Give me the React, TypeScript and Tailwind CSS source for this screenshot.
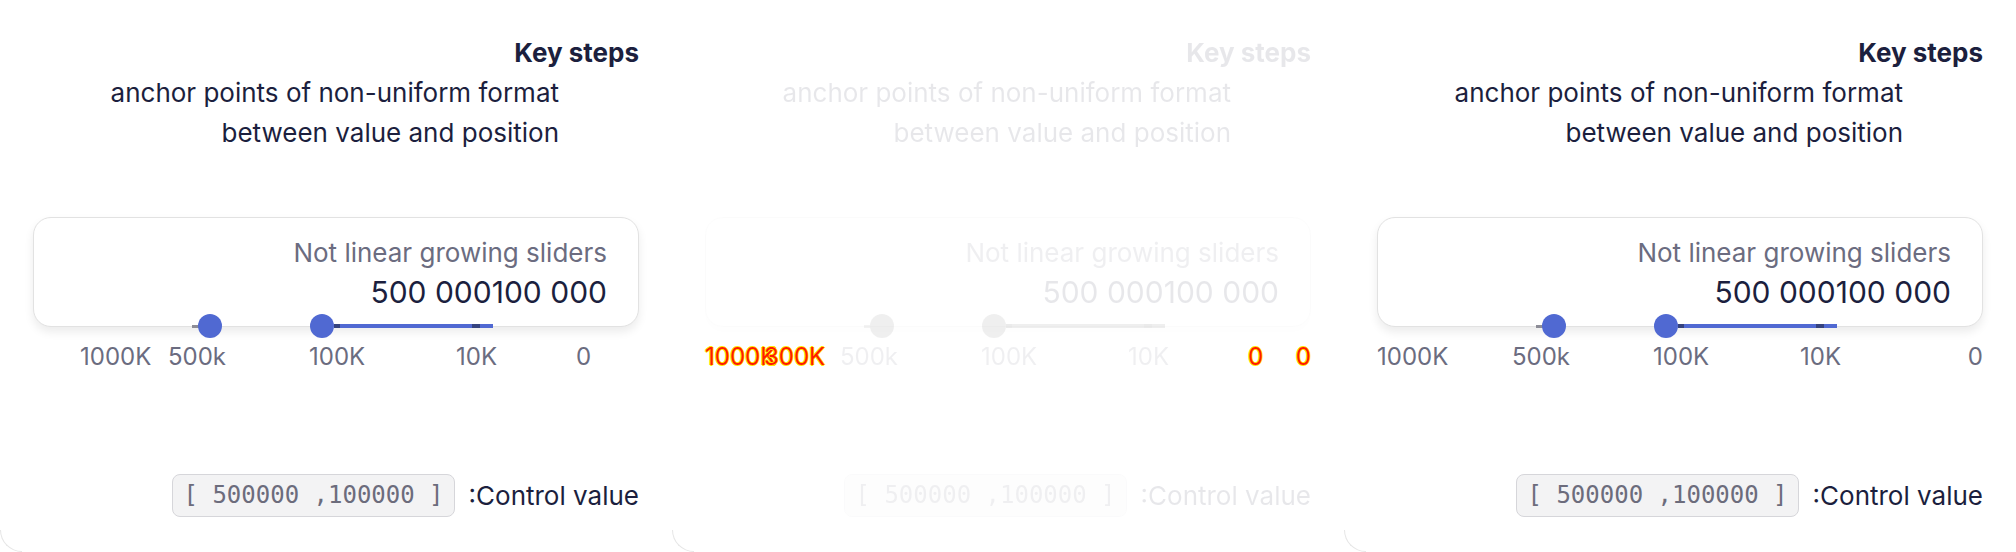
import React from "react";

type Mark = { text: string; left?: number; right?: number; hot?: boolean };

const baseMarks: Mark[] = [
  { text: "500k", left: 135 },
  { text: "100K", left: 276 },
  { text: "10K", left: 423 },
];

const panels: { marks: Mark[]; ghost?: boolean }[] = [
  {
    marks: [{ text: "1000K", left: 47 }, ...baseMarks, { text: "0", left: 543 }],
  },
  {
    ghost: true,
    marks: [
      { text: "1000K", left: 0, hot: true },
      { text: "300K", left: 59, hot: true },
      ...baseMarks,
      { text: "0", left: 543, hot: true },
      { text: "0", right: 0, hot: true },
    ],
  },
  {
    marks: [{ text: "1000K", left: 0 }, ...baseMarks, { text: "0", right: 0 }],
  },
];

const Slider = ({ ghost }: { ghost?: boolean }) => {
  return (
    <div className={`relative -mt-[13px] h-[24px] ${ghost ? "opacity-10 grayscale" : ""}`}>
      <div className="absolute left-[159px] top-[11px] h-[3px] w-[8px] bg-[#8d8d97]" />
      <div className="absolute left-[301px] top-[10px] h-[4px] w-[159px] bg-[#5069d2]" />
      <div className="absolute left-[301px] top-[10px] h-[4px] w-[6px] bg-[#35437f]" />
      <div className="absolute left-[439px] top-[10px] h-[4px] w-[8px] bg-[#35437f]" />
      <div className="absolute left-[165px] top-0 h-[24px] w-[24px] rounded-full bg-[#5069d2]" />
      <div className="absolute left-[277px] top-0 h-[24px] w-[24px] rounded-full bg-[#5069d2]" />
    </div>
  );
};

const Panel = ({ marks, ghost }: { marks: Mark[]; ghost?: boolean }) => {
  const fade = ghost ? "opacity-10" : "";
  return (
    <div className="relative h-[552px] w-[672px] shrink-0 bg-white">
      {/* corner of the frame, only the curve shows */}
      <div className="absolute bottom-0 left-0 h-[22px] w-[22px] rounded-bl-[22px] border-b border-l border-[#e6e6e6]" />

      <div className="flex flex-col px-[33px] pt-[33px] font-['Inter',sans-serif] text-[26px] text-[#1c1f3e]">
        <div className={fade}>
          <h3 className="text-right text-[26px] font-bold leading-[40px]">Key steps</h3>
          <p className="pr-[80px] text-right leading-[40px]">
            anchor points of non-uniform format
            <br />
            between value and position
          </p>
        </div>

        <div
          className={`mt-[64px] flex h-[110px] flex-col items-end rounded-[18px] border border-[#e2e2e2] bg-white pr-[31px] pt-[19px] shadow-[0_5px_10px_rgba(0,0,0,0.08)] ${fade}`}
        >
          <p className="leading-[32px] text-[#6b6c80]">Not linear growing sliders</p>
          <div className="mt-[3px] flex text-[30px] leading-[40px]">
            <span>500 000</span>
            <span>100 000</span>
          </div>
        </div>

        <Slider ghost={ghost} />

        <div className="relative mt-[3px] h-[32px] text-[24px] leading-[32px] text-[#6b6c80]">
          {marks.map((m, i) => (
            <span
              key={i}
              className={`absolute top-0 whitespace-nowrap ${
                m.hot
                  ? "text-[#ff1a00] [text-shadow:1px_0_0_#ffe600,-1px_0_0_#ffe600,0_1px_0_#ffe600,0_-1px_0_#ffe600]"
                  : fade
              } ${m.right !== undefined ? "right-0" : ""}`}
              style={m.left !== undefined ? { left: m.left } : undefined}
            >
              {m.text}
            </span>
          ))}
        </div>

        <div className={`mt-[101px] flex items-center justify-end gap-[14px] ${fade}`}>
          <code className="h-[43px] whitespace-pre rounded-[8px] border border-[#d6d6da] bg-[#f3f3f4] px-[10px] font-['DejaVu_Sans_Mono',monospace] text-[24px] leading-[41px] text-[#6c6c7c]">
            [ 500000 ,100000 ]
          </code>
          <span className="text-[26px]">:Control value</span>
        </div>
      </div>
    </div>
  );
};

export default function App() {
  return (
    <div className="flex h-[552px] w-[2016px] overflow-hidden bg-white">
      {panels.map((p, i) => (
        <Panel key={i} marks={p.marks} ghost={p.ghost} />
      ))}
    </div>
  );
}
